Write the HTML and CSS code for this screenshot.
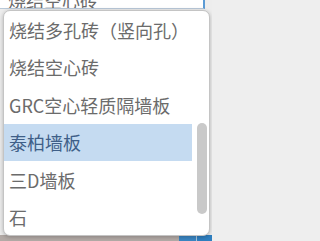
FILE: index.html
```html
<!DOCTYPE html>
<html lang="zh">
<head>
<meta charset="utf-8">
<link rel="stylesheet" href="styles.css">
</head>
<body>
<div class="page">
  <div class="select"><span class="select-text">烧结空心砖</span></div>
  <div class="dropdown">
    <ul class="options">
      <li class="option">烧结多孔砖（竖向孔）</li>
      <li class="option">烧结空心砖</li>
      <li class="option">GRC空心轻质隔墙板</li>
      <li class="option selected">泰柏墙板</li>
      <li class="option">三D墙板</li>
      <li class="option">石</li>
    </ul>
    <div class="scrollbar"><div class="thumb"></div></div>
  </div>
  <div class="strip">
    <div class="strip-gray"></div>
    <div class="strip-blue"></div>
    <div class="strip-sep"></div>
    <div class="strip-blue2"></div>
  </div>
</div>
</body>
</html>
```
FILE: styles.css
```css
html, body {
  margin: 0;
  padding: 0;
}
body {
  background: #eeeeee;
  font-family: "Noto Sans CJK SC", "Noto Sans", sans-serif;
}
.page {
  width: 212px;
  height: 241px;
  overflow: hidden;
  display: flex;
  flex-direction: column;
  background: #ededed;
}
.select {
  height: 8px;
  width: 203px;
  background: #ffffff;
  border-right: 2px solid #5b9bd5;
  border-bottom: 1px solid #b9c9d9;
  display: flex;
  align-items: flex-end;
  overflow: hidden;
  flex: none;
}
.select-text {
  padding-left: 8px;
  font-size: 18px;
  line-height: 18px;
  color: #6a6a6a;
  margin-bottom: -1px;
}
.dropdown {
  flex: none;
  margin-top: 1px;
  margin-left: 3px;
  width: 205px;
  height: 224px;
  background: #ffffff;
  border: 1px solid #c4c4c4;
  border-radius: 7px;
  box-shadow: 0 1px 4px rgba(0,0,0,0.25);
  display: flex;
  overflow: hidden;
  position: relative;
  z-index: 1;
}
.options {
  list-style: none;
  margin: 0;
  padding: 0;
  width: 188px;
  flex: none;
}
.option {
  height: 37.5px;
  display: flex;
  align-items: center;
  padding-left: 5px;
  font-size: 18px;
  color: #6b6b6b;
  white-space: nowrap;
}
.option.selected {
  background: #c5dbf1;
  color: #3f5f88;
}
.scrollbar {
  flex: 1;
  display: flex;
  justify-content: center;
  padding-top: 112px;
  padding-left: 3px;
}
.thumb {
  width: 10px;
  height: 91px;
  border-radius: 5px;
  background: #c9c9c9;
}
.strip {
  flex: none;
  height: 6px;
  margin-top: -1px;
  display: flex;
}
.strip-gray {
  width: 179px;
  background: #b3aaa6;
}
.strip-blue {
  width: 17px;
  background: #3a86c3;
}
.strip-sep {
  width: 1px;
  background: #a9c6de;
}
.strip-blue2 {
  flex: 1;
  background: #2f7fc0;
}
```
